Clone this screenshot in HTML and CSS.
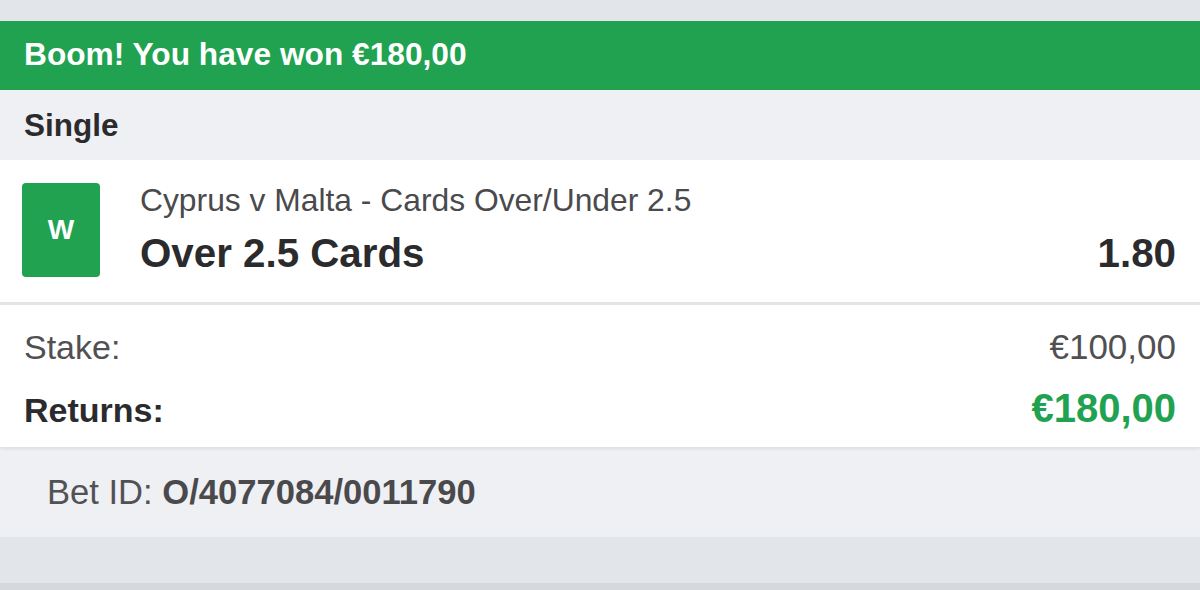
FILE: index.html
```html
<!DOCTYPE html>
<html>
<head>
<meta charset="utf-8">
<link rel="stylesheet" href="styles.css">
</head>
<body>
<div class="page">
  <div class="top-gap"></div>
  <div class="banner">Boom! You have won €180,00</div>
  <div class="bet-type">Single</div>
  <div class="card">
    <div class="selection">
      <div class="result-badge">W</div>
      <div class="sel-info">
        <div class="market">Cyprus v Malta - Cards Over/Under 2.5</div>
        <div class="sel-line">
          <span class="sel-name">Over 2.5 Cards</span>
          <span class="odds">1.80</span>
        </div>
      </div>
    </div>
    <div class="totals">
      <div class="total-row stake">
        <span>Stake:</span>
        <span>€100,00</span>
      </div>
      <div class="total-row returns">
        <span>Returns:</span>
        <span class="returns-value">€180,00</span>
      </div>
    </div>
  </div>
  <div class="bet-id"><span>Bet ID:&nbsp;</span><strong>O/4077084/0011790</strong></div>
  <div class="footer-band"></div>
  <div class="footer-edge"></div>
</div>
</body>
</html>
```

FILE: styles.css
```css
* { box-sizing: border-box; }
html, body { margin: 0; padding: 0; }
body {
  background: #e2e5e9;
  font-family: "Liberation Sans", Arial, Helvetica, sans-serif;
  color: #2c2c2e;
  width: 1200px;
  height: 590px;
  overflow: hidden;
}
.page { display: flex; flex-direction: column; height: 590px; }
.top-gap { height: 21px; background: #e2e6ea; flex: none; }
.banner {
  height: 69px;
  flex: none;
  background: #20a251;
  color: #ffffff;
  font-weight: bold;
  font-size: 31.7px;
  display: flex;
  align-items: center;
  padding-left: 24px;
  padding-bottom: 3px;
}
.bet-type {
  height: 70px;
  flex: none;
  background: #eff0f4;
  font-weight: bold;
  font-size: 31.5px;
  color: #2b2b2e;
  display: flex;
  align-items: center;
  padding-left: 24px;
}
.card {
  background: #ffffff;
  flex: none;
  box-shadow: 0 2px 3px rgba(0,0,0,0.08);
  position: relative;
}
.selection {
  height: 145px;
  display: flex;
  align-items: flex-start;
  padding: 23px 24px 0 22px;
  border-bottom: 3px solid #e3e4e7;
}
.result-badge {
  width: 78px;
  height: 94px;
  flex: none;
  background: #21a251;
  border-radius: 4px;
  color: #ffffff;
  font-weight: bold;
  font-size: 28px;
  display: flex;
  align-items: center;
  justify-content: center;
}
.sel-info {
  flex: 1;
  margin-left: 40px;
  display: flex;
  flex-direction: column;
}
.market {
  font-size: 31.8px;
  color: #4a4a4d;
  line-height: 36px;
  margin-top: -1px;
}
.sel-line {
  display: flex;
  justify-content: space-between;
  align-items: baseline;
  margin-top: 14px;
  line-height: 44px;
}
.sel-name, .odds {
  font-weight: bold;
  font-size: 40.3px;
  color: #2b2b2e;
}
.totals {
  height: 142px;
  padding: 22px 24px 0 24px;
  display: flex;
  flex-direction: column;
}
.total-row {
  display: flex;
  justify-content: space-between;
  align-items: baseline;
}
.stake {
  font-size: 34px;
  color: #505053;
  line-height: 40px;
}
.stake span:last-child { font-size: 35px; }
.returns {
  margin-top: 20px;
  font-size: 34px;
  font-weight: bold;
  color: #2b2b2e;
  line-height: 42px;
}
.returns-value {
  font-size: 40px;
  color: #21a251;
}
.bet-id {
  height: 90px;
  flex: none;
  background: #eff0f4;
  font-size: 34.6px;
  color: #525255;
  display: flex;
  align-items: center;
  padding-left: 47px;
}
.bet-id strong { color: #4a4a4d; }
.footer-band { height: 46px; flex: none; background: #e2e5e9; }
.footer-edge { flex: 1; background: #d5d8dc; }
```
